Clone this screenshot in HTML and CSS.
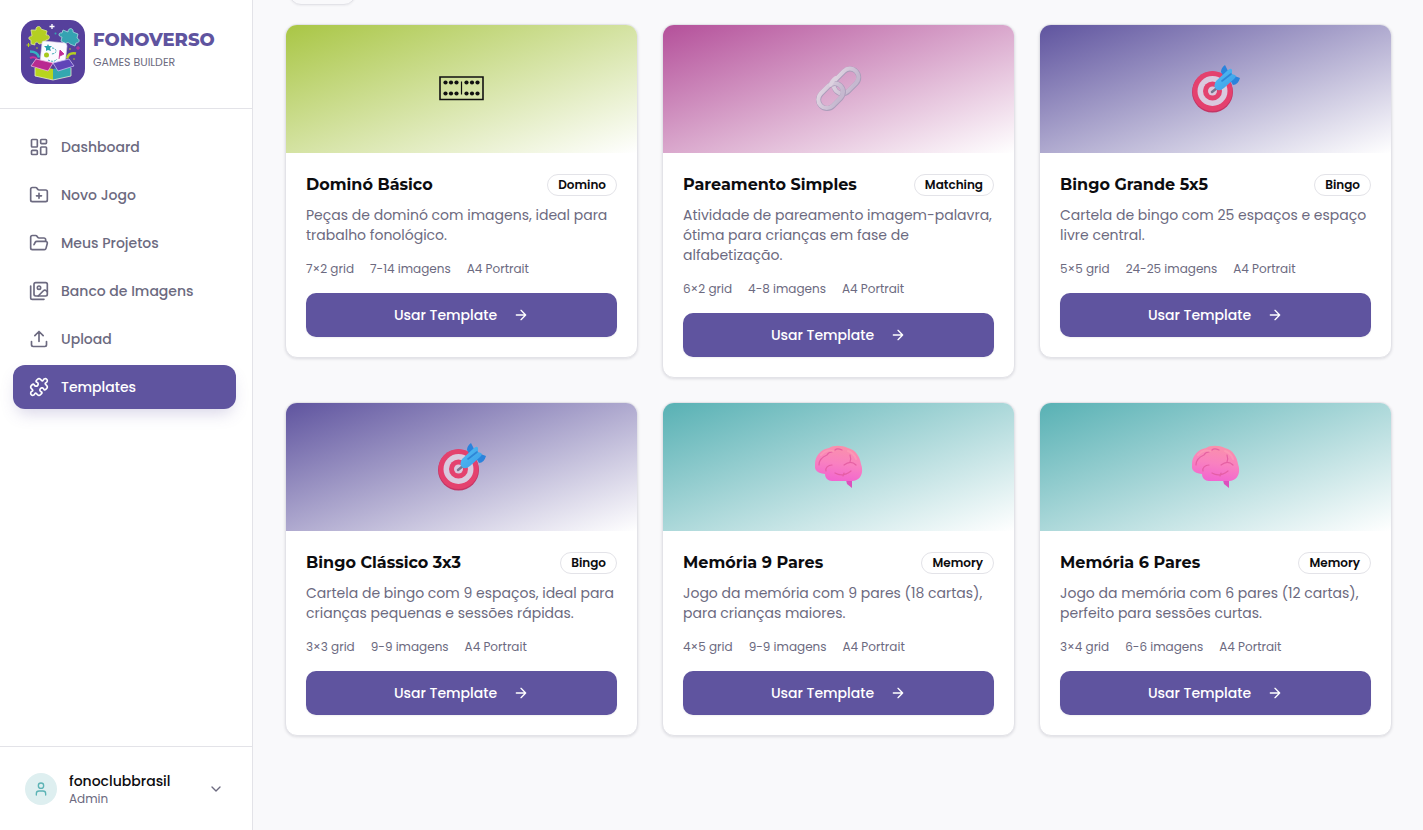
FILE: index.html
```html
<!DOCTYPE html>
<html lang="pt-BR">
<head>
<meta charset="utf-8">
<meta name="viewport" content="width=device-width, initial-scale=1">
<title>Fonoverso</title>
<link rel="stylesheet" href="styles.css">
</head>
<body>
<svg class="defs" aria-hidden="true">
  <defs>
    <linearGradient id="chain" x1="0" y1="0" x2="0.6" y2="1"><stop offset="0" stop-color="#e0d5e2"/><stop offset="1" stop-color="#c5b8cf"/></linearGradient>
    <linearGradient id="dart" x1="0" y1="0" x2="1" y2="1"><stop offset="0" stop-color="#52bdf3"/><stop offset="1" stop-color="#3a9de8"/></linearGradient>
    <linearGradient id="pink" x1="0.6" y1="0" x2="0.4" y2="1"><stop offset="0" stop-color="#fa91aa"/><stop offset="0.5" stop-color="#f981c0"/><stop offset="1" stop-color="#f264d0"/></linearGradient>
  </defs>
  <symbol id="i-arrow" viewBox="0 0 24 24"><path d="M5 12h14M12 5l7 7-7 7"/></symbol>
  <symbol id="p-domino" viewBox="0 0 48 48">
    <path d="M2 12h43v22.500H2z" fill="none" stroke="#111" stroke-width="1.600"/>
    <path d="M23.500 16.500v13" stroke="#111" stroke-width="1.200"/>
    <g fill="#111"><circle cx="7.500" cy="17.500" r="2.100"/><circle cx="13" cy="17.500" r="2.100"/><circle cx="18.500" cy="17.500" r="2.100"/><circle cx="28.500" cy="17.500" r="2.100"/><circle cx="34" cy="17.500" r="2.100"/><circle cx="39.500" cy="17.500" r="2.100"/><circle cx="7.500" cy="28.500" r="2.100"/><circle cx="13" cy="28.500" r="2.100"/><circle cx="18.500" cy="28.500" r="2.100"/><circle cx="28.500" cy="28.500" r="2.100"/><circle cx="34" cy="28.500" r="2.100"/><circle cx="39.500" cy="28.500" r="2.100"/></g>
  </symbol>
  <symbol id="p-link" viewBox="0 0 48 48">
    <g fill="none">
      <g transform="rotate(-45 31 16)"><rect x="17" y="8" width="28" height="17" rx="8.500" stroke="#ab9dba" stroke-width="5"/><rect x="17" y="7.500" width="28" height="17" rx="8.500" stroke="url(#chain)" stroke-width="4"/></g>
      <g transform="rotate(-45 16 31)"><rect x="2" y="22.500" width="28" height="17" rx="8.500" stroke="#ab9dba" stroke-width="5"/><rect x="2" y="22" width="28" height="17" rx="8.500" stroke="url(#chain)" stroke-width="4"/></g>
      <path d="M15.500 20q1-4 5-7" stroke="#ddd2e0" stroke-width="3.600" stroke-linecap="round"/>
    </g>
  </symbol>
  <symbol id="p-target" viewBox="0 0 48 48">
    <circle cx="20.500" cy="27" r="20.500" fill="#c33565"/><circle cx="20.500" cy="26" r="20" fill="#e4416e"/>
    <circle cx="20.500" cy="26" r="15" fill="#d9cadf"/><circle cx="20.500" cy="26" r="9.500" fill="#e4416e"/><circle cx="20.500" cy="26" r="4.500" fill="#d9cadf"/>
    <path d="M20 27l5-4" stroke="#77758f" stroke-width="2.500" stroke-linecap="round"/>
    <path d="M32 12l-3-5q0-4 4-7l4 8zM38 15l3 5q5 0 7-7l-8-3z" fill="#2b83dc"/>
    <path d="M24 16L35 6q4-4 5-1l0 4 3 1q2 1-1 4L32 23q-5 4-8 1t0-8z" fill="url(#dart)"/>
    <path d="M30 16l9-7" stroke="#2e86d6" stroke-width="1.600" stroke-linecap="round"/>
  </symbol>
  <symbol id="p-brain" viewBox="0 0 48 48">
    <path d="M31 37l1 4 5 4V35z" fill="#dc50bd"/>
    <path d="M7 30.500C1 29.500-1 25 0 21 0 13 6 6 14 5c4-3 13-3 19 0 8 2 12 9 13 16 3 8 0 17-9 17H17c-4 0-7-3-7-7z" fill="url(#pink)"/>
    <path d="M4 22c0-5 3-8 8-10 1-2 3-3 5-3M11 28c-1-3 2-6 6-6M20 7c2-2 5-1 7 0M29 22c5-4 9-3 12 0M35 19c1-2 1-4 0-7M20 30c5 3 11 2 16-2M28 33l1-3" fill="none" stroke="#e25a9f" stroke-width="1.200" stroke-linecap="round" opacity=".85"/>
    <path d="M6 12c5-5 8-5 12-4M33 8c5 2 7 5 8 8" fill="none" stroke="#ffabbb" stroke-width="2" stroke-linecap="round" opacity=".4"/>
  </symbol>
</svg>

<div class="app">
  <aside class="sidebar">
    <header class="brand">
      <svg class="brand-logo" viewBox="0 0 64 64" role="img" aria-label="Fonoverso">
        <rect width="64" height="64" rx="15" fill="#56409c"/>
        <path d="M10 10l5 0c-1-4 5-5 5-1l6 2-1 4c4-1 5 5 0 5l-1 3-6 1c-1-3-5-2-4 1l-4-1 0-4c-3 0-3-4 1-4z" fill="#b4cf22" stroke="#dce99a" stroke-width=".8" stroke-linejoin="round"/>
        <path d="M42 10l5 2c0-5 6-4 5 0l5 2-1 4c3 1 3 5-1 5l-1 3-5-2c-1-2-4-2-4 0l-5-3 1-4c-4 0-4-5 0-4z" fill="#35a3b2" stroke="#a7dce0" stroke-width=".8" stroke-linejoin="round"/>
        <path d="M31 4v5M28.500 6.500h5" stroke="#fff" stroke-width="1.300"/>
        <path d="M7.500 23v4M5.500 25h4" stroke="#b4cf22"/><path d="M57 26v4M55 28h4" stroke="#c9329b"/>
        <circle cx="34.500" cy="13.500" r="1" fill="#35a3b2"/><circle cx="49" cy="29" r=".8" fill="#b4cf22"/><circle cx="53" cy="39" r=".8" fill="#b4cf22"/><circle cx="16" cy="28" r=".8" fill="#b4cf22"/>
        <path d="M9 31.500c5 0 8 2 9 6" fill="none" stroke="#35b3c2" stroke-width="2.500"/><path d="M9 38q4-2 7 1" fill="none" stroke="#c9329b" stroke-width="2"/>
        <path d="M55 33.500c-5-1-8 1-9 5" fill="none" stroke="#b4cf22" stroke-width="2.500"/>
        <path d="M23 21l21 2q2 1 2 3l-2 19-25-3 2-19q0-2 2-2z" fill="#fbfaff" stroke="#d6d0e5" stroke-width=".6"/>
        <path d="M27 24l1 2 3 0-2 2 1 3-3-1-2 1 0-3-2-2 3 0z" fill="#28a2ad"/><circle cx="25.500" cy="35" r="2.500" fill="#a8c91e"/>
        <path d="M31 28c5 0 6 6-1 6M27 40q6 3 9-1" fill="none" stroke="#28a2ad" stroke-width=".9" stroke-dasharray="2 1"/>
        <path d="M38 39l1-9 4 4-4 2" fill="#c22a91" stroke="#c22a91" stroke-width=".8"/>
        <path d="M14 45l18 4v11l-18-4z" fill="#b8d41f"/><path d="M32 49l18-4v11l-18 4z" fill="#33a7b0"/>
        <path d="M15 39l17 4-5 8-17-5z" fill="#b92a91" stroke="#e8b5dd" stroke-width=".8" stroke-linejoin="round"/>
        <path d="M32 43l16-4 5 7-16 5z" fill="#6044b8" stroke="#c6baf0" stroke-width=".8" stroke-linejoin="round"/>
        <path d="M14 48v8l18 4 18-4v-8" fill="none" stroke="#e8eed0" stroke-width=".8"/>
      </svg>
      <div class="brand-text">
        <strong class="brand-name">FONOVERSO</strong>
        <span class="brand-sub">GAMES BUILDER</span>
      </div>
    </header>

    <nav class="nav">
      <a class="nav-link" href="#"><svg class="icon" viewBox="0 0 24 24"><rect x="3" y="3" width="7" height="9" rx="1"/><rect x="14" y="3" width="7" height="5" rx="1"/><rect x="14" y="12" width="7" height="9" rx="1"/><rect x="3" y="16" width="7" height="5" rx="1"/></svg>Dashboard</a>
      <a class="nav-link" href="#"><svg class="icon" viewBox="0 0 24 24"><path d="M12 10v6M9 13h6M20 20a2 2 0 0 0 2-2V8a2 2 0 0 0-2-2h-7.900a2 2 0 0 1-1.690-.9L9.600 3.900A2 2 0 0 0 7.930 3H4a2 2 0 0 0-2 2v13a2 2 0 0 0 2 2Z"/></svg>Novo Jogo</a>
      <a class="nav-link" href="#"><svg class="icon" viewBox="0 0 24 24"><path d="m6 14 1.500-2.900A2 2 0 0 1 9.240 10H20a2 2 0 0 1 1.940 2.500l-1.540 6a2 2 0 0 1-1.950 1.500H4a2 2 0 0 1-2-2V5a2 2 0 0 1 2-2h3.900a2 2 0 0 1 1.690.9l.81 1.200a2 2 0 0 0 1.670.9H18a2 2 0 0 1 2 2v2"/></svg>Meus Projetos</a>
      <a class="nav-link" href="#"><svg class="icon" viewBox="0 0 24 24"><path d="M18 22H4a2 2 0 0 1-2-2V6"/><path d="m22 13-1.296-1.296a2.410 2.410 0 0 0-3.408 0L11 18"/><circle cx="12" cy="8" r="2"/><rect x="6" y="2" width="16" height="16" rx="2"/></svg>Banco de Imagens</a>
      <a class="nav-link" href="#"><svg class="icon" viewBox="0 0 24 24"><path d="M21 15v4a2 2 0 0 1-2 2H5a2 2 0 0 1-2-2v-4M17 8l-5-5-5 5M12 3v12"/></svg>Upload</a>
      <a class="nav-link nav-link-active" href="#" aria-current="page"><svg class="icon" viewBox="0 0 24 24"><path d="M19.439 7.850c-.049.322.059.648.289.878l1.568 1.568c.470.470.706 1.087.706 1.704s-.235 1.233-.706 1.704l-1.611 1.611a.980.980 0 0 1-.837.276c-.470-.070-.802-.480-.968-.925a2.501 2.501 0 1 0-3.214 3.214c.446.166.855.497.925.968a.979.979 0 0 1-.276.837l-1.610 1.610a2.404 2.404 0 0 1-1.705.707 2.402 2.402 0 0 1-1.704-.706l-1.568-1.568a1.026 1.026 0 0 0-.877-.290c-.493.074-.840.504-1.020.968a2.500 2.500 0 1 1-3.237-3.237c.464-.180.894-.527.967-1.020a1.026 1.026 0 0 0-.289-.877l-1.568-1.568A2.402 2.402 0 0 1 1.998 12c0-.617.236-1.234.706-1.704L4.230 8.770c.240-.240.581-.353.917-.303.515.077.877.528 1.073 1.010a2.500 2.500 0 1 0 3.259-3.259c-.482-.196-.933-.558-1.010-1.073-.050-.336.062-.676.303-.917l1.525-1.525A2.402 2.402 0 0 1 12 1.998c.617 0 1.234.236 1.704.706l1.568 1.568c.230.230.556.338.877.290.493-.074.840-.504 1.020-.968a2.500 2.500 0 1 1 3.237 3.237c-.464.180-.894.527-.967 1.020Z"/></svg>Templates</a>
    </nav>

    <footer class="account">
      <button class="account-button" type="button">
        <span class="avatar"><svg class="icon icon-small" viewBox="0 0 24 24"><path d="M19 21v-2a4 4 0 0 0-4-4H9a4 4 0 0 0-4 4v2"/><circle cx="12" cy="7" r="4"/></svg></span>
        <span class="account-text"><span class="account-name">fonoclubbrasil</span><span class="account-role">Admin</span></span>
        <svg class="icon icon-small" viewBox="0 0 24 24"><path d="m6 9 6 6 6-6"/></svg>
      </button>
    </footer>
  </aside>

  <main class="main">
    <div class="filters"><button class="filter" type="button"></button></div>
    <section class="grid">
      <article class="card">
        <div class="cover cover-lime"><svg class="picture"><use href="#p-domino"/></svg></div>
        <div class="card-body">
          <div class="card-head"><h2 class="card-title">Dominó Básico</h2><span class="badge">Domino</span></div>
          <p class="card-text">Peças de dominó com imagens, ideal para trabalho fonológico.</p>
          <div class="meta"><span>7×2 grid</span><span>7-14 imagens</span><span>A4 Portrait</span></div>
          <button class="use" type="button">Usar Template<svg class="icon icon-small"><use href="#i-arrow"/></svg></button>
        </div>
      </article>
      <article class="card">
        <div class="cover cover-magenta"><svg class="picture"><use href="#p-link"/></svg></div>
        <div class="card-body">
          <div class="card-head"><h2 class="card-title">Pareamento Simples</h2><span class="badge">Matching</span></div>
          <p class="card-text">Atividade de pareamento imagem-palavra, ótima para crianças em fase de alfabetização.</p>
          <div class="meta"><span>6×2 grid</span><span>4-8 imagens</span><span>A4 Portrait</span></div>
          <button class="use" type="button">Usar Template<svg class="icon icon-small"><use href="#i-arrow"/></svg></button>
        </div>
      </article>
      <article class="card">
        <div class="cover cover-purple"><svg class="picture"><use href="#p-target"/></svg></div>
        <div class="card-body">
          <div class="card-head"><h2 class="card-title">Bingo Grande 5x5</h2><span class="badge">Bingo</span></div>
          <p class="card-text">Cartela de bingo com 25 espaços e espaço livre central.</p>
          <div class="meta"><span>5×5 grid</span><span>24-25 imagens</span><span>A4 Portrait</span></div>
          <button class="use" type="button">Usar Template<svg class="icon icon-small"><use href="#i-arrow"/></svg></button>
        </div>
      </article>
      <article class="card">
        <div class="cover cover-purple"><svg class="picture"><use href="#p-target"/></svg></div>
        <div class="card-body">
          <div class="card-head"><h2 class="card-title">Bingo Clássico 3x3</h2><span class="badge">Bingo</span></div>
          <p class="card-text">Cartela de bingo com 9 espaços, ideal para crianças pequenas e sessões rápidas.</p>
          <div class="meta"><span>3×3 grid</span><span>9-9 imagens</span><span>A4 Portrait</span></div>
          <button class="use" type="button">Usar Template<svg class="icon icon-small"><use href="#i-arrow"/></svg></button>
        </div>
      </article>
      <article class="card">
        <div class="cover cover-teal"><svg class="picture"><use href="#p-brain"/></svg></div>
        <div class="card-body">
          <div class="card-head"><h2 class="card-title">Memória 9 Pares</h2><span class="badge">Memory</span></div>
          <p class="card-text">Jogo da memória com 9 pares (18 cartas), para crianças maiores.</p>
          <div class="meta"><span>4×5 grid</span><span>9-9 imagens</span><span>A4 Portrait</span></div>
          <button class="use" type="button">Usar Template<svg class="icon icon-small"><use href="#i-arrow"/></svg></button>
        </div>
      </article>
      <article class="card">
        <div class="cover cover-teal"><svg class="picture"><use href="#p-brain"/></svg></div>
        <div class="card-body">
          <div class="card-head"><h2 class="card-title">Memória 6 Pares</h2><span class="badge">Memory</span></div>
          <p class="card-text">Jogo da memória com 6 pares (12 cartas), perfeito para sessões curtas.</p>
          <div class="meta"><span>3×4 grid</span><span>6-6 imagens</span><span>A4 Portrait</span></div>
          <button class="use" type="button">Usar Template<svg class="icon icon-small"><use href="#i-arrow"/></svg></button>
        </div>
      </article>
    </section>
  </main>
</div>
</body>
</html>
```

FILE: styles.css
```css
:root {
  --purple: #5f549f;
  --muted: #6c6a80;
  --line: #e3e3e8;
  --ink: #0c0c0f;
}

* { box-sizing: border-box; }

body {
  margin: 0;
  background: #f9f9fb;
  color: var(--ink);
  font-family: Poppins, Inter, "Open Sans", sans-serif;
  font-size: 14px;
  line-height: 20px;
}

button { font: inherit; color: inherit; cursor: pointer; }

.defs { position: absolute; width: 0; height: 0; }

.icon {
  flex: none;
  width: 20px;
  height: 20px;
  fill: none;
  stroke: currentColor;
  stroke-width: 2;
  stroke-linecap: round;
  stroke-linejoin: round;
}
.icon-small { width: 16px; height: 16px; }

.app { display: flex; height: 100vh; }

/* Sidebar */
.sidebar {
  display: flex;
  flex: none;
  flex-direction: column;
  width: 253px;
  background: #fff;
  border-right: 1px solid var(--line);
}
.brand {
  display: flex;
  align-items: center;
  gap: 8px;
  padding: 20px 20px 24px 21px;
  border-bottom: 1px solid var(--line);
}
.brand-logo { flex: none; width: 64px; height: 64px; }
.brand-text { display: flex; flex-direction: column; padding-bottom: 8px; }
.brand-name {
  color: var(--purple);
  font-family: Montserrat, Inter, sans-serif;
  font-size: 18px;
  font-weight: 800;
  line-height: 28px;
}
.brand-sub { color: var(--muted); font-size: 11px; line-height: 16px; }

.nav {
  display: flex;
  flex: 1;
  flex-direction: column;
  gap: 4px;
  padding: 16px 16px 16px 13px;
}
.nav-link {
  display: flex;
  align-items: center;
  gap: 12px;
  height: 44px;
  padding: 0 16px;
  border-radius: 12px;
  color: var(--muted);
  font-weight: 500;
  text-decoration: none;
}
.nav-link-active {
  background: var(--purple);
  box-shadow: 0 8px 16px -4px rgba(95, 84, 159, 0.25);
  color: #fff;
}

.account { padding: 16px 16px 15px; border-top: 1px solid var(--line); }
.account-button {
  display: flex;
  align-items: center;
  gap: 12px;
  width: 100%;
  padding: 8px 12px 8px 9px;
  border: 0;
  background: none;
  text-align: left;
}
.account-button > .icon { color: var(--muted); }
.avatar {
  display: grid;
  place-items: center;
  width: 32px;
  height: 32px;
  border-radius: 50%;
  background: #deeff0;
  color: #5cb3b5;
}
.account-text { display: flex; flex: 1; flex-direction: column; }
.account-name { font-weight: 500; }
.account-role { color: var(--muted); font-size: 12px; line-height: 16px; }

/* Templates */
.main { flex: 1; min-width: 0; padding: 0 31px 0 32px; overflow: hidden; }
.filters { display: flex; margin-top: -31px; padding: 0 4px; }
.filter {
  width: 67px;
  height: 36px;
  border: 1px solid var(--line);
  border-radius: 12px;
  background: #f9f9fb;
  box-shadow: 0 1px 2px rgba(20, 20, 40, 0.05);
}
.grid {
  display: grid;
  grid-template-columns: repeat(3, minmax(0, 1fr));
  align-items: start;
  gap: 24px;
  padding-top: 19px;
}
.card {
  overflow: hidden;
  border: 1px solid var(--line);
  border-radius: 12px;
  background: #fff;
  box-shadow: 0 1px 3px rgba(20, 20, 40, 0.12);
}
.cover { display: grid; place-items: center; height: 128px; }
.cover-lime { background: linear-gradient(to bottom right, #a9c645, #fff); }
.cover-magenta { background: linear-gradient(to bottom right, #b4509a, #fff); }
.cover-purple { background: linear-gradient(to bottom right, #5f549f, #fff); }
.cover-teal { background: linear-gradient(to bottom right, #58b1b4, #fff); }
.picture { width: 48px; height: 48px; }

.card-body { padding: 20px; }
.card-head {
  display: flex;
  align-items: center;
  justify-content: space-between;
  gap: 8px;
  margin-bottom: 8px;
}
.card-title {
  margin: 0;
  font-family: Montserrat, Inter, sans-serif;
  font-size: 16px;
  font-weight: 700;
  line-height: 24px;
}
.badge {
  padding: 2px 10px;
  border: 1px solid var(--line);
  border-radius: 11px;
  font-size: 12px;
  font-weight: 600;
  line-height: 16px;
}
.card-text { margin: 0 0 16px; color: var(--muted); }
.meta {
  display: flex;
  gap: 16px;
  margin-bottom: 16px;
  color: var(--muted);
  font-size: 12px;
  line-height: 16px;
}
.use {
  display: flex;
  align-items: center;
  justify-content: center;
  gap: 16px;
  width: 100%;
  height: 44px;
  border: 0;
  border-radius: 10px;
  background: var(--purple);
  box-shadow: 0 1px 2px rgba(20, 20, 40, 0.06);
  color: #fff;
  font-weight: 500;
}
```
